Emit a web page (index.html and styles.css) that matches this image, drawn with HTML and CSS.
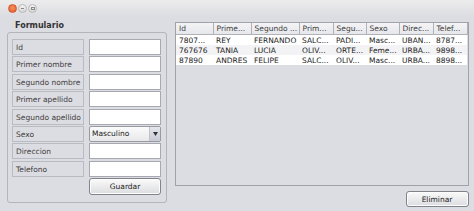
FILE: index.html
```html
<!DOCTYPE html>
<html lang="es">
<head>
    <meta charset="UTF-8">
    <title>Formulario</title>
    <link rel="stylesheet" href="styles.css">
</head>
<body>
<div class="window">
    <div class="titlebar">
        <span class="wbtn close"></span>
        <span class="wbtn"><span class="dash"></span></span>
        <span class="wbtn"><span class="box"></span></span>
    </div>
    <div class="content">
        <div class="form_side">
            <div class="legend">Formulario</div>
            <div class="form_panel">
                <div class="row"><div class="lbl">Id</div><input class="txt" type="text"></div>
                <div class="row"><div class="lbl">Primer nombre</div><input class="txt" type="text"></div>
                <div class="row"><div class="lbl">Segundo nombre</div><input class="txt" type="text"></div>
                <div class="row"><div class="lbl">Primer apellido</div><input class="txt" type="text"></div>
                <div class="row"><div class="lbl">Segundo apellido</div><input class="txt" type="text"></div>
                <div class="row"><div class="lbl">Sexo</div>
                    <div class="combo"><span>Masculino</span><span class="arrow"><svg width="5" height="4" viewBox="0 0 5 4"><path d="M0 0H5L2.5 4Z" fill="#333"/></svg></span></div>
                </div>
                <div class="row"><div class="lbl">Direccion</div><input class="txt" type="text"></div>
                <div class="row"><div class="lbl">Telefono</div><input class="txt" type="text"></div>
                <div class="row"><div class="spacer"></div><div class="btn btn_guardar">Guardar</div></div>
            </div>
        </div>
        <div class="table_side">
            <div class="table_pane">
                <table class="grid">
                    <colgroup>
                        <col style="width:37px"><col style="width:38px"><col style="width:48px"><col style="width:34px">
                        <col style="width:33px"><col style="width:33px"><col style="width:34px"><col style="width:34px">
                    </colgroup>
                    <thead>
                    <tr><th>Id</th><th>Prime...</th><th>Segundo ...</th><th>Prim...</th><th>Segu...</th><th>Sexo</th><th>Direc...</th><th>Telef...</th></tr>
                    </thead>
                    <tbody>
                    <tr><td>7807...</td><td>REY</td><td>FERNANDO</td><td>SALC...</td><td>PADI...</td><td>Masc...</td><td>UBAN...</td><td>8787...</td></tr>
                    <tr><td>767676</td><td>TANIA</td><td>LUCIA</td><td>OLIV...</td><td>ORTE...</td><td>Feme...</td><td>URBA...</td><td>9898...</td></tr>
                    <tr><td>87890</td><td>ANDRES</td><td>FELIPE</td><td>SALC...</td><td>OLIV...</td><td>Masc...</td><td>URBA...</td><td>8898...</td></tr>
                    </tbody>
                </table>
            </div>
            <div class="btn_area">
                <div class="btn btn_eliminar">Eliminar</div>
            </div>
        </div>
    </div>
</div>
</body>
</html>
```

FILE: styles.css
```css
body{
    margin: 0;
    font-family: "DejaVu Sans", sans-serif;
    font-size: 7.5px;
    color: #3c3c3c;
}
.window{
    box-sizing: border-box;
    width: 474px;
    height: 211px;
    background-color: #dcdde2;
    display: flex;
    flex-direction: column;
}
.titlebar{
    height: 16px;
    display: flex;
    align-items: center;
    gap: 1px;
    padding-left: 8px;
    background: linear-gradient(#ececec, #dcdde2);
}
.wbtn{
    box-sizing: border-box;
    width: 9px;
    height: 9px;
    border-radius: 50%;
    border: 1px solid #b8b8b8;
    background: linear-gradient(#f4f4f4, #d6d6d6);
    display: flex;
    align-items: center;
    justify-content: center;
}
.wbtn.close{
    border-color: #d4572e;
    background: radial-gradient(circle at 50% 40%, #f7935e, #e0562b);
}
.wbtn>.dash{
    width: 3px;
    height: 1px;
    background-color: #888;
}
.wbtn>.box{
    box-sizing: border-box;
    width: 4px;
    height: 3px;
    border: 1px solid #888;
}
.content{
    flex: 1;
    display: flex;
    padding: 6px 8px 4px 7px;
    gap: 8px;
}
.form_side{
    width: 161px;
    margin-bottom: 4px;
    display: flex;
    flex-direction: column;
}
.legend{
    font-weight: bold;
    font-size: 8px;
    padding-left: 8px;
    height: 10px;
    line-height: 7px;
    color: #333;
}
.form_panel{
    flex: 1;
    box-sizing: border-box;
    border: 1px solid #b3b5bc;
    border-radius: 3px;
    padding: 6px 5px 0 4px;
    display: flex;
    flex-direction: column;
    gap: 1.4px;
}
.form_panel>.row{
    display: flex;
    gap: 5px;
    height: 16px;
}
.lbl{
    box-sizing: border-box;
    width: 72px;
    border: 1px solid #b9bbc2;
    padding: 3px 0 0 3px;
    background-color: #dcdde2;
}
.txt{
    box-sizing: border-box;
    width: 72px;
    height: 16px;
    margin: 0;
    border: 1px solid #a7a9b0;
    background-color: white;
}
.combo{
    box-sizing: border-box;
    width: 72px;
    height: 16px;
    border: 1px solid #989aa1;
    background: linear-gradient(#fbfbfb, #e8e8ea);
    border-radius: 2px;
    display: flex;
    align-items: center;
    justify-content: space-between;
    padding-left: 2px;
    color: #222;
}
.combo>.arrow{
    width: 10px;
    height: 14px;
    border-left: 1px solid #c0c2c8;
    background: linear-gradient(#e4e6ec, #c8cbd4);
    display: flex;
    align-items: center;
    justify-content: center;
}
.spacer{
    width: 72px;
}
.btn{
    box-sizing: border-box;
    border: 1px solid #7f838c;
    border-radius: 3px;
    background: linear-gradient(#fafafa, #dcdde0);
    text-align: center;
    color: #222;
    box-shadow: inset 0 0 0 1px #fdfdfd;
}
.btn_guardar{
    width: 72px;
    height: 17px;
    padding-top: 3px;
}
.table_side{
    flex: 1;
    display: flex;
    flex-direction: column;
}
.table_pane{
    box-sizing: border-box;
    height: 164px;
    border: 1px solid #9fa2a9;
    background-color: #dcdde2;
    overflow: hidden;
}
.grid{
    border-collapse: collapse;
    table-layout: fixed;
    width: 291px;
}
.grid th{
    font-weight: normal;
    text-align: left;
    height: 11px;
    padding: 0 0 0 3px;
    border-right: 1px solid #b0b2b8;
    border-bottom: 1px solid #b0b2b8;
    background: linear-gradient(#f4f4f6, #e6e7eb);
    white-space: nowrap;
    overflow: hidden;
}
.grid td{
    height: 10px;
    padding: 0 0 0 3px;
    background-color: white;
    white-space: nowrap;
    overflow: hidden;
    color: #222;
}
.grid tbody tr:nth-child(2) td{
    background-color: #f3f3f5;
}
.btn_area{
    display: flex;
    justify-content: flex-end;
    padding-top: 5px;
}
.btn_eliminar{
    width: 63px;
    height: 16px;
    padding-top: 3px;
}
```
